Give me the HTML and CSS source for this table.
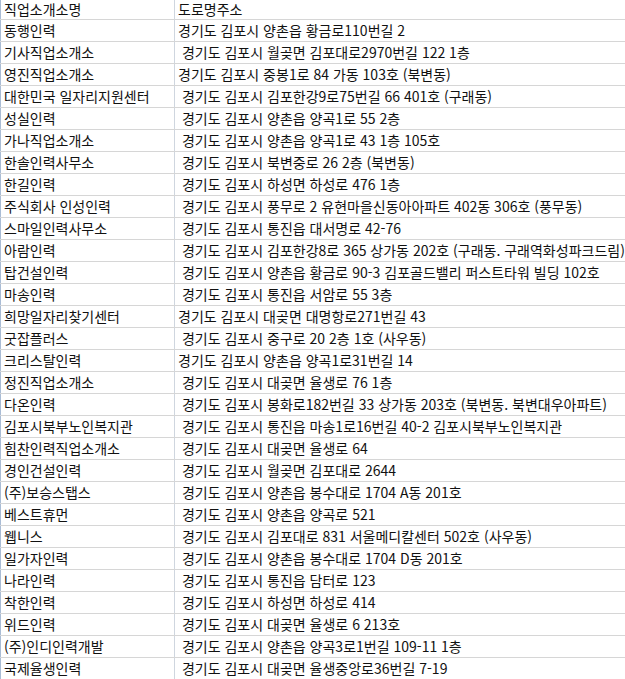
FILE: index.html
```html
<!DOCTYPE html>
<html lang="ko">
<head>
<meta charset="utf-8">
<title>직업소개소</title>
<link rel="stylesheet" href="styles.css">
</head>
<body>
<div class="sheet">
  <div class="row head"><div class="c1">직업소개소명</div><div class="c2">도로명주소</div></div>
  <div class="row"><div class="c1">동행인력</div><div class="c2">경기도 김포시 양촌읍 황금로110번길 2</div></div>
  <div class="row"><div class="c1">기사직업소개소</div><div class="c2"> 경기도 김포시 월곶면 김포대로2970번길 122 1층</div></div>
  <div class="row"><div class="c1">영진직업소개소</div><div class="c2">경기도 김포시 중봉1로 84 가동 103호 (북변동)</div></div>
  <div class="row"><div class="c1">대한민국 일자리지원센터</div><div class="c2"> 경기도 김포시 김포한강9로75번길 66 401호 (구래동)</div></div>
  <div class="row"><div class="c1">성실인력</div><div class="c2"> 경기도 김포시 양촌읍 양곡1로 55 2층</div></div>
  <div class="row"><div class="c1">가나직업소개소</div><div class="c2"> 경기도 김포시 양촌읍 양곡1로 43 1층 105호</div></div>
  <div class="row"><div class="c1">한솔인력사무소</div><div class="c2"> 경기도 김포시 북변중로 26 2층 (북변동)</div></div>
  <div class="row"><div class="c1">한길인력</div><div class="c2"> 경기도 김포시 하성면 하성로 476 1층</div></div>
  <div class="row"><div class="c1">주식회사 인성인력</div><div class="c2"> 경기도 김포시 풍무로 2 유현마을신동아아파트 402동 306호 (풍무동)</div></div>
  <div class="row"><div class="c1">스마일인력사무소</div><div class="c2"> 경기도 김포시 통진읍 대서명로 42-76</div></div>
  <div class="row"><div class="c1">아람인력</div><div class="c2"> 경기도 김포시 김포한강8로 365 상가동 202호 (구래동. 구래역화성파크드림)</div></div>
  <div class="row"><div class="c1">탑건설인력</div><div class="c2"> 경기도 김포시 양촌읍 황금로 90-3 김포골드밸리 퍼스트타워 빌딩 102호</div></div>
  <div class="row"><div class="c1">마송인력</div><div class="c2"> 경기도 김포시 통진읍 서암로 55 3층</div></div>
  <div class="row"><div class="c1">희망일자리찾기센터</div><div class="c2">경기도 김포시 대곶면 대명항로271번길 43</div></div>
  <div class="row"><div class="c1">굿잡플러스</div><div class="c2"> 경기도 김포시 중구로 20 2층 1호 (사우동)</div></div>
  <div class="row"><div class="c1">크리스탈인력</div><div class="c2">경기도 김포시 양촌읍 양곡1로31번길 14</div></div>
  <div class="row"><div class="c1">정진직업소개소</div><div class="c2"> 경기도 김포시 대곶면 율생로 76 1층</div></div>
  <div class="row"><div class="c1">다온인력</div><div class="c2"> 경기도 김포시 봉화로182번길 33 상가동 203호 (북변동. 북변대우아파트)</div></div>
  <div class="row"><div class="c1">김포시북부노인복지관</div><div class="c2"> 경기도 김포시 통진읍 마송1로16번길 40-2 김포시북부노인복지관</div></div>
  <div class="row"><div class="c1">힘찬인력직업소개소</div><div class="c2"> 경기도 김포시 대곶면 율생로 64</div></div>
  <div class="row"><div class="c1">경인건설인력</div><div class="c2"> 경기도 김포시 월곶면 김포대로 2644</div></div>
  <div class="row"><div class="c1">(주)보승스탭스</div><div class="c2"> 경기도 김포시 양촌읍 봉수대로 1704 A동 201호</div></div>
  <div class="row"><div class="c1">베스트휴먼</div><div class="c2"> 경기도 김포시 양촌읍 양곡로 521</div></div>
  <div class="row"><div class="c1">웹니스</div><div class="c2"> 경기도 김포시 김포대로 831 서울메디칼센터 502호 (사우동)</div></div>
  <div class="row"><div class="c1">일가자인력</div><div class="c2"> 경기도 김포시 양촌읍 봉수대로 1704 D동 201호</div></div>
  <div class="row"><div class="c1">나라인력</div><div class="c2"> 경기도 김포시 통진읍 담터로 123</div></div>
  <div class="row"><div class="c1">착한인력</div><div class="c2"> 경기도 김포시 하성면 하성로 414</div></div>
  <div class="row"><div class="c1">위드인력</div><div class="c2"> 경기도 김포시 대곶면 율생로 6 213호</div></div>
  <div class="row"><div class="c1">(주)인디인력개발</div><div class="c2"> 경기도 김포시 양촌읍 양곡3로1번길 109-11 1층</div></div>
  <div class="row"><div class="c1">국제율생인력</div><div class="c2"> 경기도 김포시 대곶면 율생중앙로36번길 7-19</div></div>
</div>
</body>
</html>
```

FILE: styles.css
```css
html, body {
  margin: 0;
  padding: 0;
  background: #ffffff;
  overflow: hidden;
}

.sheet {
  width: 100%;
  font-family: "Noto Sans CJK KR", "Noto Sans", sans-serif;
  font-size: 14px;
  color: #111111;
}

.row {
  display: flex;
  height: 22px;
  box-sizing: border-box;
  border-bottom: 1px solid #d6d6d6;
}

.row.head {
  height: 20px;
}

.c1, .c2 {
  white-space: pre;
  overflow: hidden;
  line-height: 20px;
  padding-left: 3px;
  box-sizing: border-box;
}

.row.head .c1, .row.head .c2 {
  line-height: 18px;
}

.c1 {
  flex: 0 0 175px;
  border-left: 1px solid #a9bcd5;
  border-right: 1px solid #cfd6df;
}

.c2 {
  flex: 1 1 auto;
  min-width: 0;
}
```
